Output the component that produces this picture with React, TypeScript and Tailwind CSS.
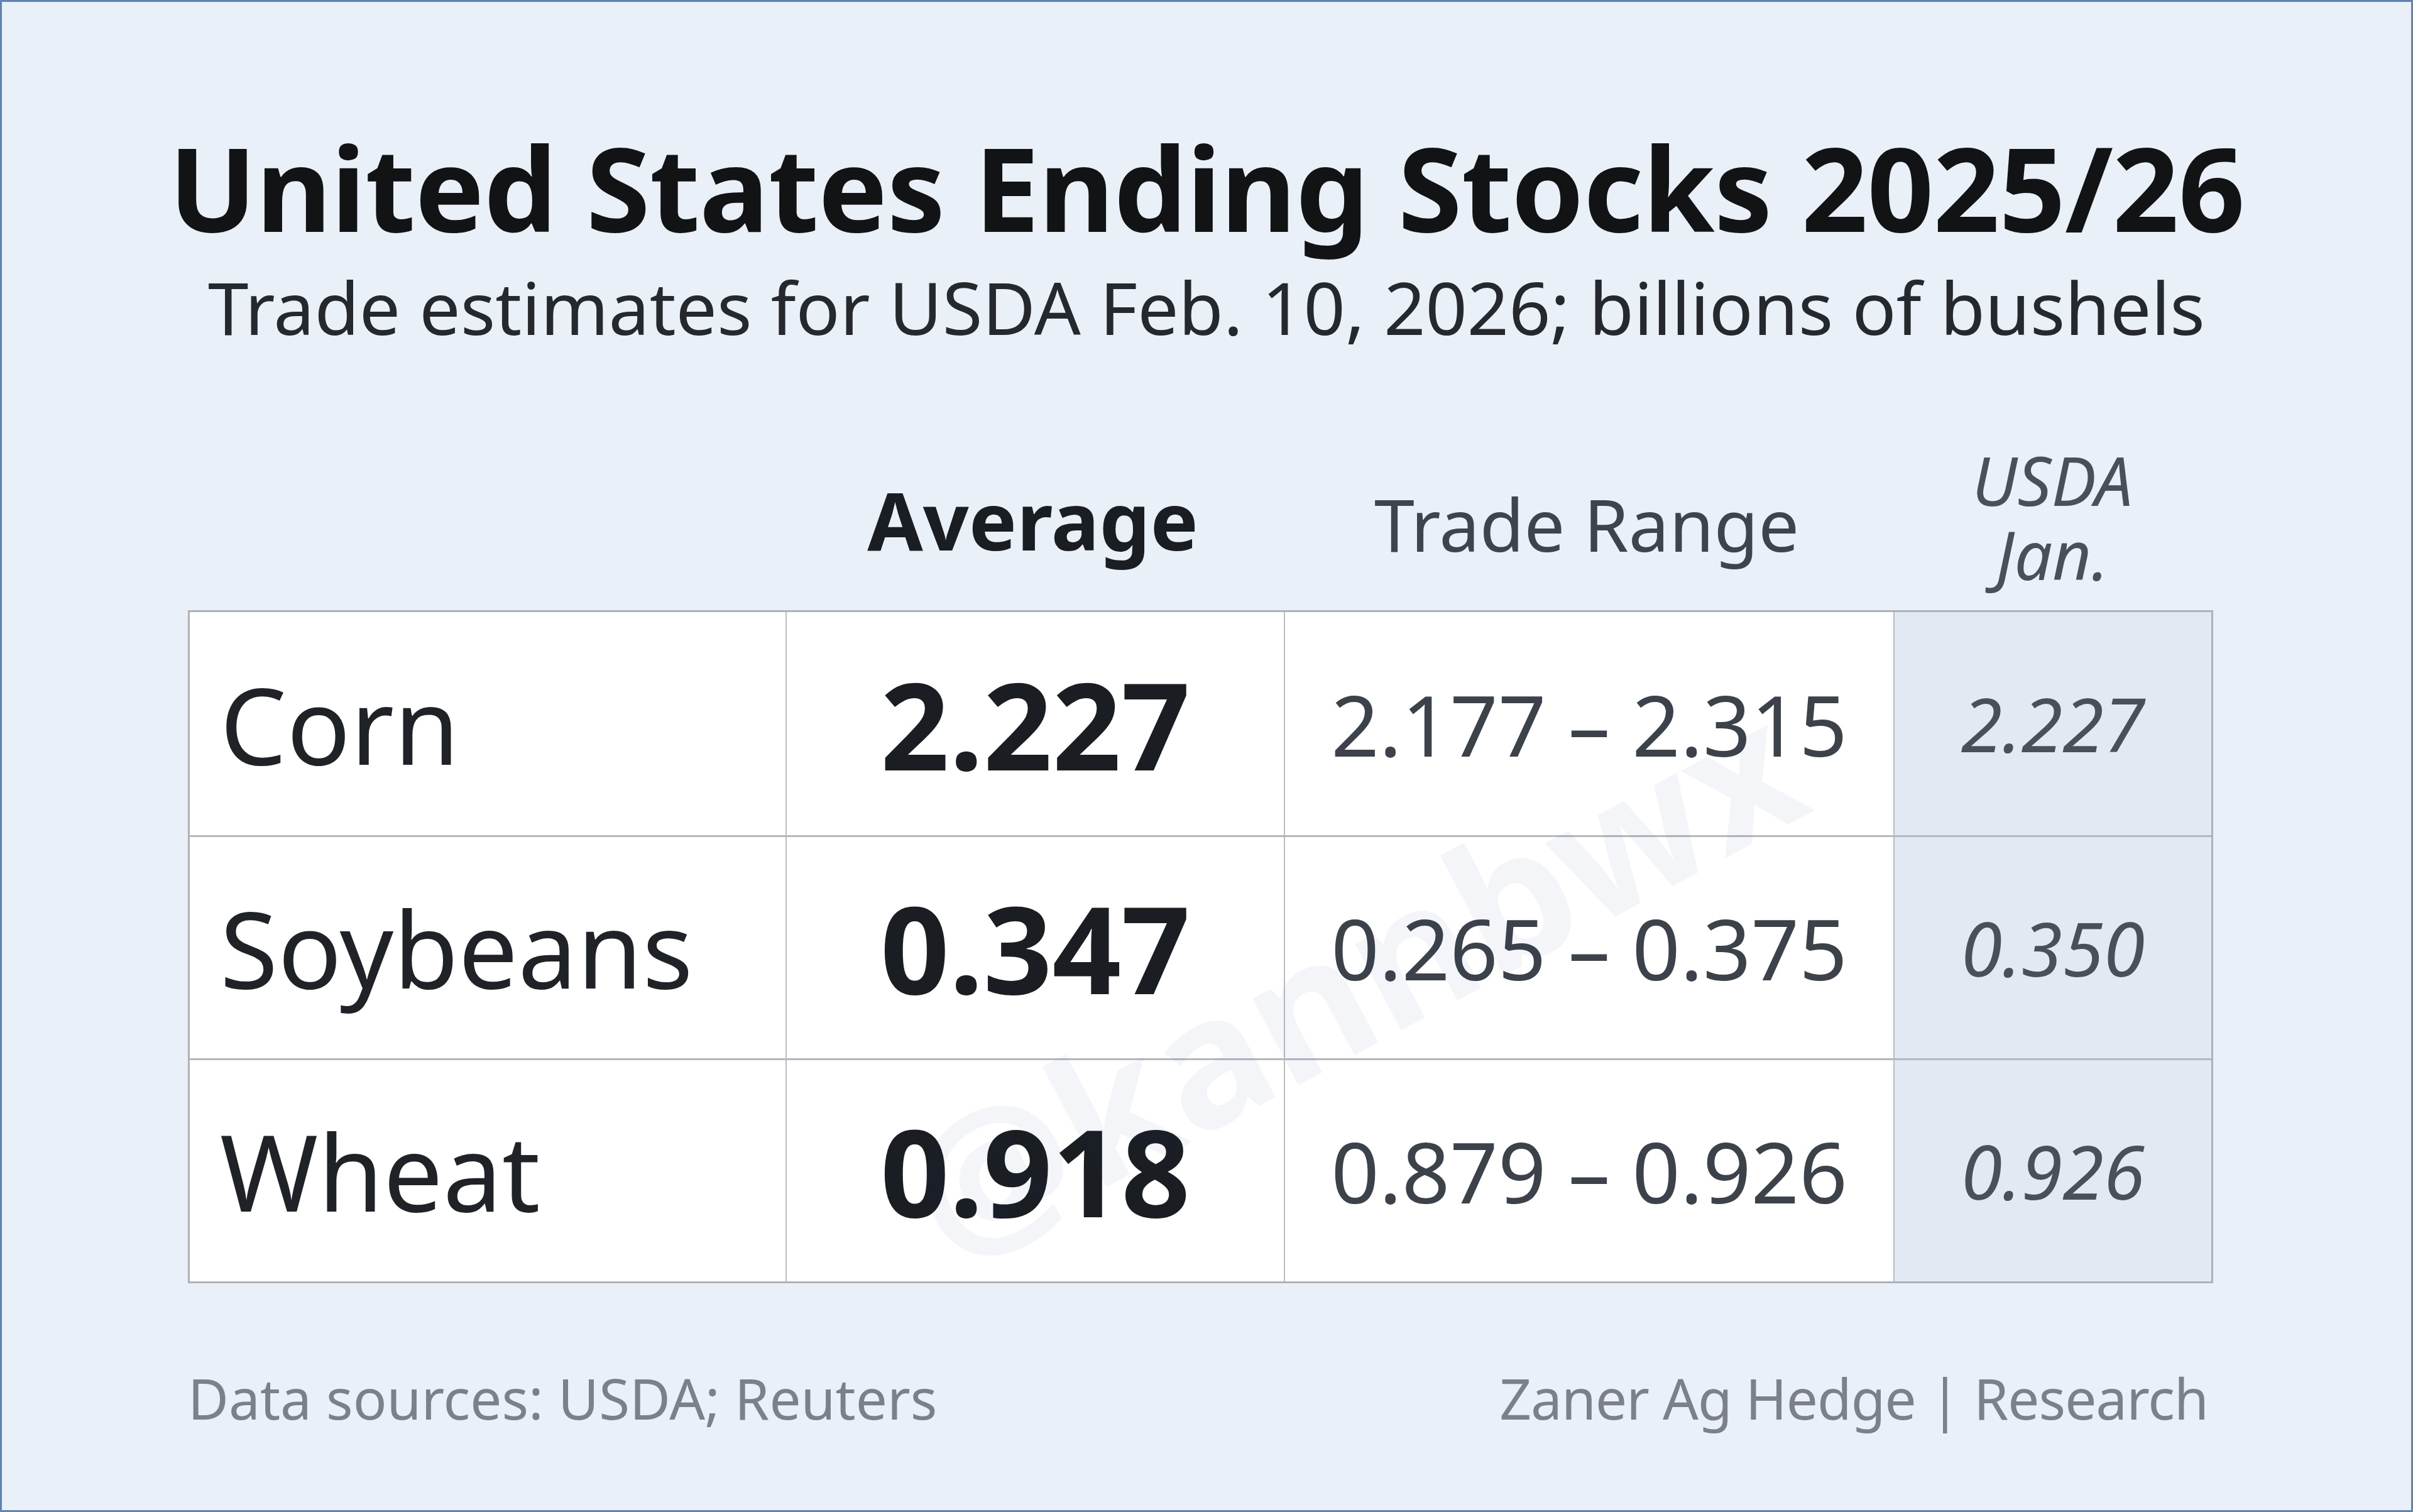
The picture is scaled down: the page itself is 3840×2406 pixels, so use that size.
import React from 'react';

const rows = [
  { name: 'Corn', avg: '2.227', range: '2.177 – 2.315', jan: '2.227' },
  { name: 'Soybeans', avg: '0.347', range: '0.265 – 0.375', jan: '0.350' },
  { name: 'Wheat', avg: '0.918', range: '0.879 – 0.926', jan: '0.926' },
];

const font = { fontFamily: '"Noto Sans", "Open Sans", sans-serif' };

const App: React.FC = () => {
  return (
    <div
      className="w-[3840px] h-[2406px] bg-[#eaf0f8] border-[3px] border-[#6283b2] flex flex-col px-[296px]"
      style={font}
    >
      {/* heading */}
      <div className="flex flex-col items-center pt-[202px] -mx-[200px]">
        <h1 className="text-[185px] leading-none font-bold text-[#121315] tracking-[-1px] whitespace-nowrap">
          United States Ending Stocks 2025/26
        </h1>
        <p className="mt-[40px] text-[116px] leading-none text-[#25282d] whitespace-nowrap">
          Trade estimates for USDA Feb. 10, 2026; billions of bushels
        </p>
      </div>

      {/* column headings */}
      <div className="grid grid-cols-[948px_793px_970px_512px] w-[3223px] mt-[159px] items-end">
        <div />
        <div className="text-center text-[128px] leading-none font-bold text-[#1a1d21] pb-[80px]">Average</div>
        <div className="text-center text-[115px] leading-none text-[#3e444c] pb-[80px]">Trade Range</div>
        <div className="text-center text-[107px] leading-[118px] italic text-[#4a5059] pb-[30px]">
          USDA
          <br />
          Jan.
        </div>
      </div>

      {/* table */}
      <div className="relative w-[3223px] border-[3px] border-[#aeb2b8] overflow-hidden">
        {rows.map((r, i) => (
          <div
            key={r.name}
            className={`grid grid-cols-[948px_793px_970px_1fr] h-[355px] ${i > 0 ? 'border-t-[3px] border-[#b4b8be]' : ''}`}
          >
            <div className="bg-white flex items-center pl-[48px] text-[168px] text-[#1f2328] leading-none">
              {r.name}
            </div>
            <div className="bg-white border-l-[2px] border-[#b9bdc3] flex items-center justify-center text-[192px] font-bold text-[#1a1d21] leading-none">
              {r.avg}
            </div>
            <div className="bg-white border-l-[2px] border-[#b9bdc3] flex items-center justify-center text-[134px] text-[#3c424a] leading-none whitespace-nowrap">
              {r.range}
            </div>
            <div className="bg-[#e2e9f3] border-l-[2px] border-[#b9bdc3] flex items-center justify-center text-[119px] italic text-[#4a5059] leading-none">
              {r.jan}
            </div>
          </div>
        ))}
        {/* watermark */}
        <div className="absolute left-[1070px] top-[440px] -rotate-[28deg] origin-center text-[285px] font-bold leading-none text-[#1e3a8a]/[0.05] pointer-events-none select-none whitespace-nowrap">
          @kannbwx
        </div>
      </div>

      {/* footer */}
      <div className="flex justify-between items-center w-[3223px] mt-[138px] text-[89px] leading-none text-[#7b8089] pr-[8px]">
        <span>Data sources: USDA; Reuters</span>
        <span className="tracking-[-1px]">Zaner Ag Hedge | Research</span>
      </div>
    </div>
  );
};

export default App;
